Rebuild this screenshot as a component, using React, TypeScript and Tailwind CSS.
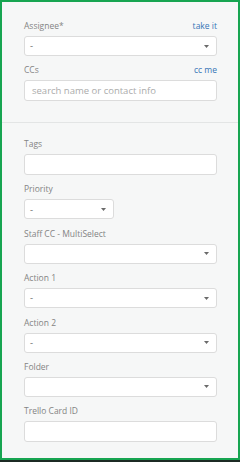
type FieldProps = {
  label: string;
  kind: "select" | "input";
  value?: string;
  placeholder?: string;
  link?: string;
  width?: string;
};

function Caret() {
  return (
    <svg width="5" height="3" viewBox="0 0 5 3" className="shrink-0">
      <path d="M0 0h5L2.5 3z" fill="#6a6a6a" />
    </svg>
  );
}

function Field({ label, kind, value, placeholder, link, width = "w-full" }: FieldProps) {
  return (
    <div className="flex flex-col">
      <div className="flex items-center justify-between h-[12px] mb-[4px]">
        <span className="text-[8.5px] leading-[12px] text-[#848484]">{label}</span>
        {link && <span className="text-[8.5px] leading-[12px] text-[#3574b6]">{link}</span>}
      </div>
      {kind === "select" ? (
        <div
          className={`${width} h-[20px] bg-white border border-[#dcdcdc] rounded-[3px] flex items-center justify-between pl-[5px] pr-[7px]`}
        >
          <span className="text-[9.5px] leading-none text-[#666]">{value}</span>
          <Caret />
        </div>
      ) : (
        <div
          className={`${width} h-[21px] bg-white border border-[#dcdcdc] rounded-[3px] flex items-center pl-[7px]`}
        >
          <span className="text-[9.5px] leading-none text-[#ababab]">{placeholder}</span>
        </div>
      )}
    </div>
  );
}

export default function App() {
  return (
    <div className="w-[240px] h-[462px] flex flex-col bg-[#1c2a24] font-['Open_Sans',sans-serif]">
      <div className="h-[460px] border-2 border-[#17a551] bg-[#f6f7f7] flex flex-col">
        <div className="pl-[22px] pr-[21px] pt-[18px] pb-[21px] flex flex-col gap-[8px]">
          <Field label="Assignee*" kind="select" value="-" link="take it" />
          <Field label="CCs" kind="input" placeholder="search name or contact info" link="cc me" />
        </div>
        <div className="h-px bg-[#e3e5e5]" />
        <div className="pl-[22px] pr-[21px] pt-[15px] flex flex-col gap-[8.4px]">
          <Field label="Tags" kind="input" />
          <Field label="Priority" kind="select" value="-" width="w-[90px]" />
          <Field label="Staff CC - MultiSelect" kind="select" />
          <Field label="Action 1" kind="select" value="-" />
          <Field label="Action 2" kind="select" value="-" />
          <Field label="Folder" kind="select" />
          <Field label="Trello Card ID" kind="input" />
        </div>
      </div>
    </div>
  );
}
